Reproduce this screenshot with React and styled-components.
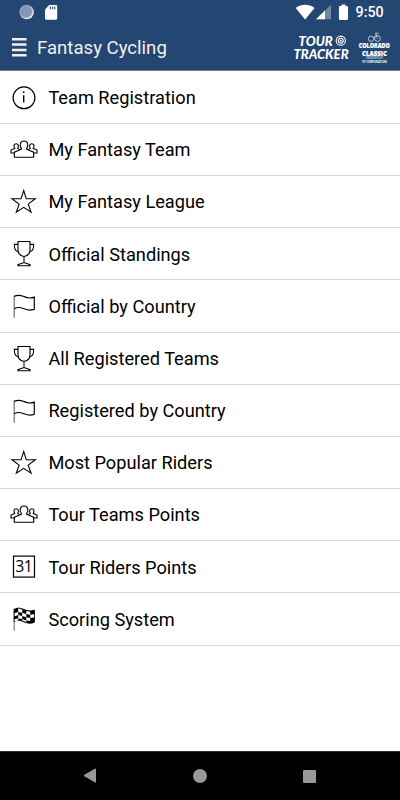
import React from "react";
import styled, { createGlobalStyle } from "styled-components";

const menuList = [
  { icon: "info", label: "Team Registration" },
  { icon: "team", label: "My Fantasy Team" },
  { icon: "star", label: "My Fantasy League" },
  { icon: "trophy", label: "Official Standings" },
  { icon: "flag", label: "Official by Country" },
  { icon: "trophy", label: "All Registered Teams" },
  { icon: "flag", label: "Registered by Country" },
  { icon: "star", label: "Most Popular Riders" },
  { icon: "team", label: "Tour Teams Points" },
  { icon: "calendar", label: "Tour Riders Points" },
  { icon: "checkered", label: "Scoring System" },
];

const MenuIcon = ({ name }) => {
  switch (name) {
    case "info":
      return (
        <Icon viewBox="0 0 30 30">
          <circle cx="15" cy="14.8" r="10.9" strokeWidth="1.2" />
          <path d="M14.7 12.2v7.4" strokeWidth="1.4" />
          <circle cx="14.7" cy="9.1" r="0.95" fill="#000" stroke="none" />
        </Icon>
      );
    case "team":
      return (
        <Icon viewBox="0 0 30 30">
          <path
            d="M5.3 22.2v-5l5.4-2.1 1.9-1.1c-2.4-3-1.8-8 2.4-8s4.8 5 2.4 8l1.9 1.1 5.4 2.1v5z"
            strokeWidth="1.1"
          />
          <path d="M5.3 18H2v-2.9l3.7-1.7c-1.3-2.2-.8-4.6 1.5-4.6s2.8 2.4 1.5 4.6l2 1.3" strokeWidth="1.1" />
          <path d="M24.7 18H28v-2.9l-3.7-1.7c1.3-2.2.8-4.6-1.5-4.6s-2.8 2.4-1.5 4.6l-2 1.3" strokeWidth="1.1" />
        </Icon>
      );
    case "star":
      return (
        <Icon viewBox="0 0 30 30">
          <path d="M14.7 3.5l2.6 8.3h9l-7.1 5.3 2.9 8.1-7.4-4.9-7.4 4.9 2.8-8.1-7.1-5.3h9z" strokeWidth="1.1" />
        </Icon>
      );
    case "trophy":
      return (
        <Icon viewBox="0 0 30 30">
          <path d="M9 2.5h12v8.6c0 3.7-2.5 5.7-6 6.4-3.5-.7-6-2.7-6-6.4z" strokeWidth="1.1" />
          <path d="M9 5.4H5.4c-.3 4 .8 6.5 3.7 7.3M21 5.4h3.6c.3 4-.8 6.5-3.7 7.3" strokeWidth="1.1" />
          <path d="M15 17.5v6" />
          <path d="M8.9 26.7v-1l6.1-2.1 6.1 2.1v1z" strokeWidth="1.1" />
        </Icon>
      );
    case "flag":
      return (
        <Icon viewBox="0 0 30 30">
          <path d="M5.2 4.3v22.4" stroke="#555" />
          <path
            d="M5.2 5.5c4.2-2.5 7-1 9.9.1 3.6 1.5 6.8 2 10.2.5v12.2c-3.4 1.5-6.6 1-10.2-.5-2.9-1.1-5.7-2.6-9.9-.1"
            strokeWidth="1.15"
          />
        </Icon>
      );
    case "calendar":
      return (
        <Icon viewBox="0 0 30 30">
          <rect x="4.5" y="4.1" width="21" height="21" strokeWidth="1.2" />
          <text x="6.2" y="20.2" fontSize="15.8" textLength="17.6" fill="#000" stroke="none">
            31
          </text>
        </Icon>
      );
    default:
      return (
        <Icon viewBox="0 0 30 30">
          <path d="M5.2 4.5v22.2" stroke="#666" />
          <path d="M5.2 5.5c4.2-2.5 7-1 9.9.1 3.6 1.5 6.8 2 10.2.5v12.2c-3.4 1.5-6.6 1-10.2-.5-2.9-1.1-5.7-2.6-9.9-.1z" fill="#000" />
          <path
            d="M9.2 4.6l4 .8v3.3l-4-.8zM17.3 6.9l3.9.8v3.1l-3.9-.8zM5.6 9l3.6-1.1v3.2l-3.6 1.1zM13.2 8.7l4.1 1.3v3.2l-4.1-1.3zM21.2 10.8l3.8-.6v3.2l-3.8.5zM9.2 11.1l4 .8v3.2l-4-.7zM17.3 13.2l3.9.7v3.2l-3.9-.6zM5.6 15.3l3.6-1v2.1l-3.6 1zM13.2 15.1l4.1 1.4v1.4l-4.1-1.4z"
            fill="#fff"
            stroke="none"
          />
        </Icon>
      );
  }
};

const StatusIcons = () => (
  <>
    <svg width="60" height="24" viewBox="0 0 60 24">
      <circle cx="26.8" cy="12.2" r="7" fill="#e6eaf0" />
      <circle cx="26" cy="11.5" r="6.3" fill="#8498b4" stroke="#a5b3c7" strokeDasharray="1 1" />
      <path d="M49.3 5h6.4c.9 0 1.5.6 1.5 1.5v11.8c0 .9-.6 1.5-1.5 1.5h-9.2c-.9 0-1.5-.6-1.5-1.5V9.5z" fill="#fff" />
      <path d="M50.3 6.4v2.8M52.6 6.4v2.8M54.8 6.4v2.8" stroke="#244673" strokeWidth="1.1" />
    </svg>
    <StatusRight>
      <svg width="56" height="24" viewBox="294 0 56 24">
        <path d="M295.7 8c5.5-4.3 13.3-4.3 18.8 0L305.1 19.4z" fill="#fff" />
        <path d="M331 4.8v14.4h-15z" fill="#71869f" />
        <path d="M325 10.6v8.6h-9z" fill="#fff" />
        <path d="M341.6 4.5h3.8v1.4h1.3c.8 0 1.3.5 1.3 1.3v11.4c0 .8-.5 1.3-1.3 1.3h-6.5c-.8 0-1.3-.5-1.3-1.3V7.2c0-.8.5-1.3 1.3-1.3h1.4z" fill="#fff" />
      </svg>
      <Time>9:50</Time>
    </StatusRight>
  </>
);

const Logos = () => (
  <svg width="108" height="45" viewBox="292 25 108 45" fill="#fff">
    <g fontFamily="Lato, sans-serif" fontWeight="900" fontStyle="italic" fontSize="13.8">
      <text x="298.6" y="45.6" textLength="34.2" lengthAdjust="spacingAndGlyphs">
        TOUR
      </text>
      <text x="293.4" y="59.1" textLength="55.2" lengthAdjust="spacingAndGlyphs">
        TRACKER
      </text>
    </g>
    <g fill="none" stroke="#fff">
      <circle cx="340.8" cy="40.7" r="4.6" strokeWidth="1.1" />
      <circle cx="340.8" cy="40.7" r="2.4" strokeWidth="1.1" />
    </g>
    <circle cx="340.8" cy="40.7" r="1" />
    <g fill="none" stroke="#d5dde7" strokeWidth="0.8">
      <circle cx="371" cy="38.8" r="2.7" />
      <circle cx="377.5" cy="38.5" r="2.9" />
      <path d="M373.5 38.2l2.5-2.9M377.5 38.4l-1.9-5.2h3.1" />
    </g>
    <g fontFamily="'Open Sans', sans-serif" fontWeight="800" stroke="#fff" strokeWidth="0.2">
      <text x="358.8" y="48.3" fontSize="7.2" textLength="31" lengthAdjust="spacingAndGlyphs">
        COLORADO
      </text>
      <text x="362" y="55.6" fontSize="7.2" textLength="24.8" lengthAdjust="spacingAndGlyphs">
        CLASSIC
      </text>
    </g>
    <g fontFamily="'Open Sans', sans-serif" fontWeight="700">
      <text x="366" y="59.2" fontSize="2.6" textLength="17" opacity="0.65">
        PRESENTED BY
      </text>
      <text x="362.2" y="62.8" fontSize="3.4" textLength="24.7" lengthAdjust="spacingAndGlyphs">
        VF CORPORATION
      </text>
    </g>
  </svg>
);

const App = () => {
  return (
    <>
      <GlobalStyle />
      <Screen>
        <StatusBar>
          <StatusIcons />
        </StatusBar>
        <Header>
          <MenuButton aria-label="Menu">
            <svg width="15" height="20">
              <path d="M0 2.2h14.5M0 7.6h14.5M0 13h14.5M0 18.3h14.5" stroke="#f3eff0" strokeWidth="2.5" />
            </svg>
          </MenuButton>
          <Title>Fantasy Cycling</Title>
          <Logos />
        </Header>
        <MenuList>
          {menuList.map((menu) => (
            <MenuItem key={menu.label}>
              <MenuIcon name={menu.icon} />
              <Label>{menu.label}</Label>
            </MenuItem>
          ))}
        </MenuList>
        <NavBar>
          <svg width="14" height="16">
            <path d="M1 7.5L12.5.9v13.4z" fill="#999" stroke="#999" strokeLinejoin="round" />
          </svg>
          <HomeButton />
          <RecentButton />
        </NavBar>
      </Screen>
    </>
  );
};

const GlobalStyle = createGlobalStyle`
  * {
    box-sizing: border-box;
  }
  body {
    margin: 0;
    background: #fff;
    font-family: Roboto, sans-serif;
  }
  svg {
    display: block;
    flex-shrink: 0;
  }
`;

const Screen = styled.div`
  width: 400px;
  height: 800px;
  display: flex;
  flex-direction: column;
  overflow: hidden;
`;

const StatusBar = styled.div`
  height: 25px;
  display: flex;
  justify-content: space-between;
  background: #244673;
`;

const StatusRight = styled.div`
  display: flex;
  width: 106px;
`;

const Time = styled.span`
  margin-left: 5.5px;
  font-size: 14.3px;
  font-weight: 500;
  line-height: 25px;
  color: #fff;
`;

const Header = styled.header`
  height: 46px;
  display: flex;
  background: #244673;
  border-bottom: 1px solid #777f8c;
`;

const MenuButton = styled.button`
  width: 37px;
  padding: 12px 0 0 11.5px;
  border: 0;
  background: none;
  display: flex;
  align-items: flex-start;
`;

const Title = styled.h1`
  flex: 1;
  margin: 0;
  font-size: 18.6px;
  font-weight: 400;
  line-height: 46px;
  white-space: nowrap;
  color: #f3eff0;
`;

const MenuList = styled.ul`
  flex: 1;
  margin: 0;
  padding: 0.7px 0 0;
  list-style: none;
`;

const MenuItem = styled.li`
  height: 52.18px;
  padding-left: 9px;
  display: flex;
  align-items: center;
  border-bottom: 1px solid #d9d9d9;
`;

const Icon = styled.svg`
  width: 30px;
  height: 30px;
  margin-top: 1px;
  fill: none;
  stroke: #000;
  font-family: "Open Sans", sans-serif;
`;

const Label = styled.span`
  margin-left: 9.4px;
  padding-top: 1.5px;
  font-size: 18.2px;
  line-height: 24px;
  white-space: nowrap;
  color: #000;
`;

const NavBar = styled.nav`
  height: 49px;
  padding: 0 84px 0 83px;
  display: flex;
  justify-content: space-between;
  align-items: center;
  background: #000;
  border-top: 1px solid #303030;
`;

const HomeButton = styled.span`
  width: 14px;
  height: 14px;
  border-radius: 50%;
  background: #999;
`;

const RecentButton = styled.span`
  width: 13px;
  height: 13px;
  border-radius: 1px;
  background: #999;
`;

export default App;
